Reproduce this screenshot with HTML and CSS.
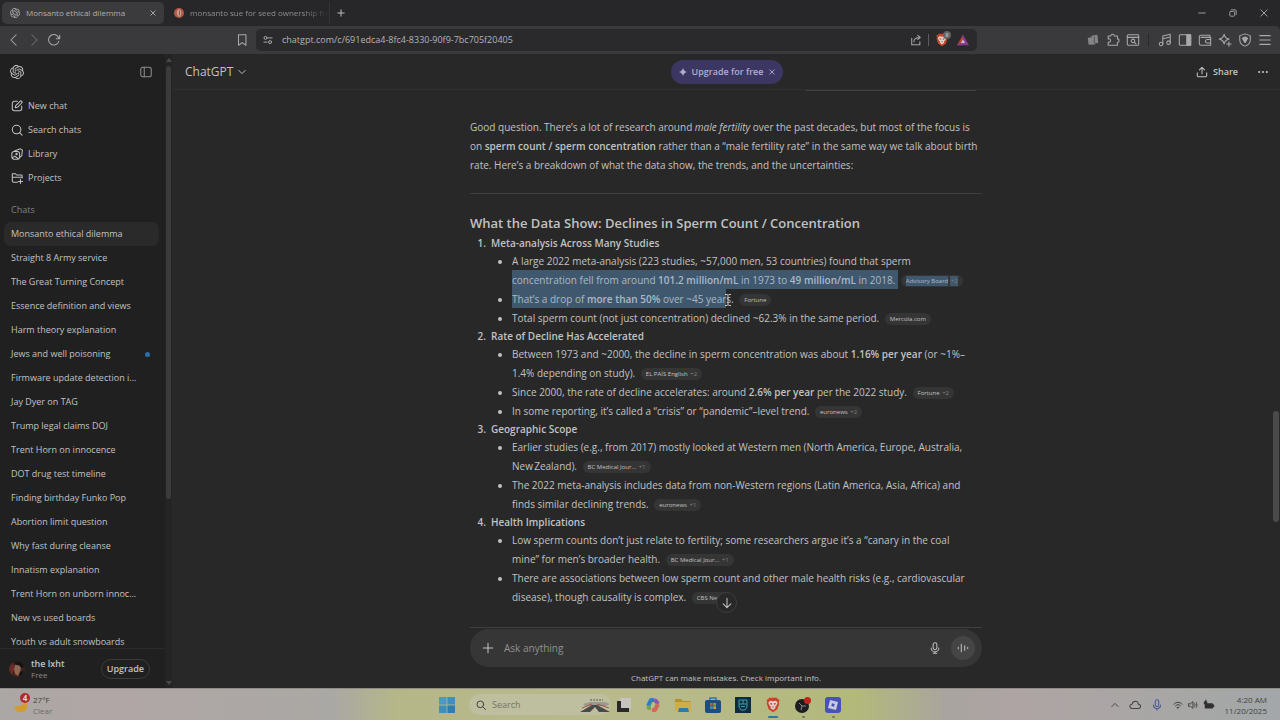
FILE: index.html
```html
<!DOCTYPE html>
<html lang="en">

<head>
  <meta charset="UTF-8">
  <meta name="viewport" content="width=device-width, initial-scale=1.0">
  <title>Monsanto ethical dilemma</title>
  <link rel="stylesheet" href="styles.css">
</head>

<body>
  <svg class="defs" aria-hidden="true">
    <symbol id="knot" viewBox="0 0 24 24">
      <path fill="currentColor" d="M22.2819 9.8211a5.9847 5.9847 0 0 0-.5157-4.9108 6.0462 6.0462 0 0 0-6.5098-2.9A6.0651 6.0651 0 0 0 4.9807 4.1818a5.9847 5.9847 0 0 0-3.9977 2.9 6.0462 6.0462 0 0 0 .7427 7.0966 5.98 5.98 0 0 0 .511 4.9107 6.051 6.051 0 0 0 6.5146 2.9001A5.9847 5.9847 0 0 0 13.2599 24a6.0557 6.0557 0 0 0 5.7718-4.2058 5.9894 5.9894 0 0 0 3.9977-2.9001 6.0557 6.0557 0 0 0-.7475-7.0729zm-9.022 12.6081a4.4755 4.4755 0 0 1-2.8764-1.0408l.1419-.0804 4.7783-2.7582a.7948.7948 0 0 0 .3927-.6813v-6.7369l2.02 1.1686a.071.071 0 0 1 .038.052v5.5826a4.504 4.504 0 0 1-4.4945 4.4944zm-9.6607-4.1254a4.4708 4.4708 0 0 1-.5346-3.0137l.142.0852 4.783 2.7582a.7712.7712 0 0 0 .7806 0l5.8428-3.3685v2.3324a.0804.0804 0 0 1-.0332.0615L9.74 19.9502a4.4992 4.4992 0 0 1-6.1408-1.6464zM2.3408 7.8956a4.485 4.485 0 0 1 2.3655-1.9728V11.6a.7664.7664 0 0 0 .3879.6765l5.8144 3.3543-2.0201 1.1685a.0757.0757 0 0 1-.071 0l-4.8303-2.7865A4.504 4.504 0 0 1 2.3408 7.872zm16.5963 3.8558L13.1038 8.364 15.1192 7.2a.0757.0757 0 0 1 .071 0l4.8303 2.7913a4.4944 4.4944 0 0 1-.6765 8.1042v-5.6772a.79.79 0 0 0-.407-.667zm2.0107-3.0231l-.142-.0852-4.7735-2.7818a.7759.7759 0 0 0-.7854 0L9.409 9.2297V6.8974a.0662.0662 0 0 1 .0284-.0615l4.8303-2.7866a4.4992 4.4992 0 0 1 6.6802 4.66zM8.3065 12.863l-2.02-1.1638a.0804.0804 0 0 1-.038-.0567V6.0742a4.4992 4.4992 0 0 1 7.3757-3.4537l-.142.0805L8.704 5.459a.7948.7948 0 0 0-.3927.6813zm1.0976-2.3654l2.602-1.4998 2.6069 1.4998v2.9994l-2.5974 1.4997-2.6067-1.4997Z" />
    </symbol>
    <symbol id="lion" viewBox="0 0 20 22">
      <path fill="#c8452a" d="M5 1h10l2 2 2 1-1 3 .6 2L16 17l-6 4-6-4L1.400 9 2 7 1 4l2-1z" />
      <path fill="#dcd3cf" d="M6 5l4 1 4-1 2.500 3-2 4-1.500 1 .5 2L10 18l-3.500-3 .5-2-1.500-1-2-4z" />
      <path fill="#c8452a" d="M6 8l3 1-.5 2L6.500 10zM14 8l-3 1 .5 2 2-1zM8.500 13h3L10 15z" />
    </symbol>
  </svg>

  <!-- tab strip -->
  <header class="tabs">
    <div class="tab active">
      <svg class="icon-10"><use href="#knot" /></svg>
      <span>Monsanto ethical dilemma</span>
      <button aria-label="Close tab"><svg class="icon-6 line" viewBox="0 0 8 8"><path d="M1 1l6 6M7 1L1 7" /></svg></button>
    </div>
    <div class="tab">
      <svg class="icon-10" viewBox="0 0 12 12"><circle cx="6" cy="6" r="6" fill="#b05a45" /><path d="M6 1.500c-2 1-3 3-2.500 5S5 10 6 10.500s2.500-1.500 2.700-4S8 2 6 1.500z" fill="#c9a493" /><path d="M6.500 3v6" stroke="#7c3b30" /></svg>
      <span class="fade">monsanto sue for seed ownership fro</span>
    </div>
    <button class="new-tab" aria-label="New tab"><svg class="icon-8 line" viewBox="0 0 10 10"><path d="M5 1v8M1 5h8" /></svg></button>
    <div class="window-buttons">
      <button aria-label="Minimize"><svg class="icon-8 line" viewBox="0 0 10 10"><path d="M1 5h8" /></svg></button>
      <button aria-label="Restore"><svg class="icon-8 line" viewBox="0 0 10 10"><rect x="1" y="3" width="6" height="6" rx="1" /><path d="M3 1h4.500A1.500 1.500 0 0 1 9 2.500V7" /></svg></button>
      <button aria-label="Close"><svg class="icon-8 line" viewBox="0 0 10 10"><path d="M1 1l8 8M9 1L1 9" /></svg></button>
    </div>
  </header>

  <!-- toolbar -->
  <div class="toolbar">
    <div class="nav-buttons">
      <button aria-label="Back"><svg class="icon-14 line" viewBox="0 0 16 16"><path d="M10.500 2l-6 6 6 6" /></svg></button>
      <button class="dim" aria-label="Forward"><svg class="icon-14 line" viewBox="0 0 16 16"><path d="M5.500 2l6 6-6 6" /></svg></button>
      <button aria-label="Reload"><svg class="icon-14 line" viewBox="0 0 16 16"><path d="M13.500 9.500A6 6 0 1 1 13.500 6M14.500 2.500v4h-4" /></svg></button>
      <button class="bookmark" aria-label="Bookmark"><svg class="icon-14 line" viewBox="0 0 16 16"><path d="M4 2h8.500v12L8.200 11 4 14z" /></svg></button>
    </div>
    <div class="address">
      <svg class="icon-10 line" viewBox="0 0 12 12"><circle cx="3" cy="3.500" r="1.800" /><path d="M6 3.500h5M1 8.500h4" /><circle cx="8.500" cy="8.500" r="1.800" /></svg>
      <input type="text" aria-label="Address" value="chatgpt.com/c/691edca4-8fc4-8330-90f9-7bc705f20405">
      <button aria-label="Share page"><svg class="icon-12 line" viewBox="0 0 14 14"><path d="M2 5v7.500h9.500V9M4.500 9c0-3 2-5 7-5M9 1.500L12 4 9 6.500" /></svg></button>
      <i class="divider"></i>
      <button class="shield" aria-label="Shields"><svg class="icon-14"><use href="#lion" /></svg><b>8</b></button>
      <button aria-label="Rewards"><svg class="icon-12" viewBox="0 0 14 14"><path fill="#b8472f" d="M7 1L0 13h4l3-6z" /><path fill="#8a3a96" d="M7 1l7 12H0l3-2.500h6.500L6 4z" /><path fill="#c9bdc4" d="M7 6l2.500 4.500h-5z" /></svg></button>
    </div>
    <div class="extensions">
      <button aria-label="Extension"><svg class="icon-14" viewBox="0 0 16 16"><path fill="#858587" d="M6 3l7-1 1 9-4 1zM2 5.500l7-1 1.500 8.500-7.500.5z" /><path d="M9.500 4v8" stroke="#4a4a4c" /></svg></button>
      <button aria-label="Extensions"><svg class="icon-14 line" viewBox="0 0 16 16"><path d="M2.500 3.500h3a2 2 0 1 1 4 0h3.500v3.200a2 2 0 1 1 0 4V14H2.500v-3.500a2 2 0 1 0 0-3.700z" /></svg></button>
      <button aria-label="Search tabs"><svg class="icon-14 line" viewBox="0 0 16 16"><rect x="1.500" y="2" width="13" height="12" rx="1" /><path d="M1.500 5h13M9.500 10.500l2 2" /><circle cx="8" cy="9" r="2" /></svg></button>
      <i class="divider dark"></i>
      <button aria-label="Playlist"><svg class="icon-14 line" viewBox="0 0 16 16"><circle cx="3.500" cy="12.500" r="2" /><circle cx="12" cy="11" r="2" /><path d="M5.500 12.500V3.500L14 1.500V11M5.500 6.500L14 4.500" /></svg></button>
      <button aria-label="Sidebar"><svg class="icon-14 line" viewBox="0 0 16 16"><rect x="1.500" y="2" width="13" height="12" rx="1" /><path fill="currentColor" d="M10 2h4.500v12H10z" /></svg></button>
      <button aria-label="Wallet"><svg class="icon-14 line" viewBox="0 0 16 16"><path d="M13.500 5V2.500h-10A2 2 0 0 0 1.500 4v8a2 2 0 0 0 2 2h11V5h-11M14.500 7.500h-4a2 2 0 0 0 0 4h4" /></svg></button>
      <button aria-label="Leo AI"><svg class="icon-14 line" viewBox="0 0 16 16"><path d="M7 1.500c.8 3.500 2 4.700 5.500 5.500C9 7.800 7.800 9 7 12.500 6.200 9 5 7.800 1.500 7 5 6.200 6.200 5 7 1.500zM12.500 10v5M10 12.500h5" /></svg></button>
      <button aria-label="VPN"><svg class="icon-14 line" viewBox="0 0 16 16"><path d="M8 1l6 2v5c0 3.500-3 6-6 7-3-1-6-3.500-6-7V3z" /><path fill="currentColor" d="M5 6l3-1.500L11 6l-3 5z" /></svg></button>
      <button aria-label="Menu"><svg class="icon-14 line" viewBox="0 0 16 16"><path d="M2 3h12M2 8h12M2 13h12" /></svg></button>
    </div>
  </div>

  <div class="app">
    <aside class="sidebar">
      <div class="sidebar-top">
        <a href="#" aria-label="Home"><svg class="icon-14"><use href="#knot" /></svg></a>
        <button aria-label="Close sidebar"><svg class="icon-14 line" viewBox="0 0 16 16"><rect x="2" y="2.500" width="12" height="11" rx="2.500" /><path d="M6 2.500v11" /></svg></button>
      </div>
      <nav class="menu">
        <a href="#"><svg class="icon-12 line" viewBox="0 0 14 14"><path d="M7.500 1.500H4A2.500 2.500 0 0 0 1.500 4v6A2.500 2.500 0 0 0 4 12.500h6a2.500 2.500 0 0 0 2.500-2.500V7M5 9l.5-2.500 5-5a1.400 1.400 0 0 1 2 2l-5 5z" /></svg>New chat</a>
        <a href="#"><svg class="icon-12 line" viewBox="0 0 14 14"><circle cx="6.500" cy="6.500" r="5" /><path d="M10 10l3 3" /></svg>Search chats</a>
        <a href="#"><svg class="icon-12 line" viewBox="0 0 14 14"><path d="M4 4V3.500L11 1l2.300 1.500-.8 6.500-2 1.500" /><rect x="1" y="4" width="9" height="9" rx="2.500" /><path d="M1.500 11.500l3-2 4 3" /><circle cx="6.500" cy="7" r=".8" /></svg>Library</a>
        <a href="#"><svg class="icon-12 line" viewBox="0 0 14 14"><path d="M7.500 12H3a1.500 1.500 0 0 1-1.500-1.500V2H5l1.500 1.500H12a1 1 0 0 1 1 1V7M1.500 6H13M11 8.500v5M8.500 11h5" /></svg>Projects</a>
      </nav>
      <h2>Chats</h2>
      <nav class="chats">
        <a href="#" class="current">Monsanto ethical dilemma</a>
        <a href="#">Straight 8 Army service</a>
        <a href="#">The Great Turning Concept</a>
        <a href="#">Essence definition and views</a>
        <a href="#">Harm theory explanation</a>
        <a href="#" class="unread">Jews and well poisoning</a>
        <a href="#">Firmware update detection i...</a>
        <a href="#">Jay Dyer on TAG</a>
        <a href="#">Trump legal claims DOJ</a>
        <a href="#">Trent Horn on innocence</a>
        <a href="#">DOT drug test timeline</a>
        <a href="#">Finding birthday Funko Pop</a>
        <a href="#">Abortion limit question</a>
        <a href="#">Why fast during cleanse</a>
        <a href="#">Innatism explanation</a>
        <a href="#">Trent Horn on unborn innoc...</a>
        <a href="#">New vs used boards</a>
        <a href="#">Youth vs adult snowboards</a>
      </nav>
      <div class="account">
        <svg class="icon-16" viewBox="0 0 16 16"><circle cx="8" cy="8" r="8" fill="#3a2420" /><path fill="#6b2a26" d="M1 5a8 8 0 0 0 2 9l3-7-2-5z" /><path fill="#8f6553" d="M6 4c3-2 6 0 6 3l-1 4-2 4-3-2-1-5z" /><path fill="#151313" d="M5 1c4-2 9 0 10 5l-3 1c-1-3-3-3-5-3zM11 11l4-1-2 4-3 1z" /></svg>
        <div class="who">
          <strong>the lxht</strong>
          <span>Free</span>
        </div>
        <button>Upgrade</button>
      </div>
    </aside>
    <div class="side-scroll"><i class="up"></i><i class="thumb"></i><i class="down"></i></div>

    <main>
      <div class="chat-header">
        <button class="model">ChatGPT <svg class="icon-8 line" viewBox="0 0 10 10"><path d="M1 3l4 4 4-4" /></svg></button>
        <button class="promo"><svg class="icon-8" viewBox="0 0 10 10"><path fill="currentColor" d="M5 0c.7 2.700 2.300 4.300 5 5-2.700.7-4.300 2.300-5 5-.7-2.700-2.300-4.300-5-5 2.700-.7 4.300-2.300 5-5z" /></svg>Upgrade for free<svg class="icon-6 line" viewBox="0 0 8 8"><path d="M1 1l6 6M7 1L1 7" /></svg></button>
        <div class="actions">
          <button><svg class="icon-12 line" viewBox="0 0 14 14"><path d="M7 9V1.500M4 4.500l3-3 3 3M1.500 8v3a1.500 1.500 0 0 0 1.500 1.500h8a1.500 1.500 0 0 0 1.500-1.500V8" /></svg>Share</button>
          <button aria-label="More"><svg class="icon-10" viewBox="0 0 10 10"><g fill="currentColor"><circle cx="1.200" cy="5" r="1.100" /><circle cx="5" cy="5" r="1.100" /><circle cx="8.800" cy="5" r="1.100" /></g></svg></button>
        </div>
      </div>

      <div class="conversation">
        <div class="thread">
          <div class="bubble-edge"></div>
          <article>
            <p>Good question. There’s a lot of research around <em>male fertility</em> over the past decades, but most of the focus is<br>
              on <b>sperm count / sperm concentration</b> rather than a “male fertility rate” in the same way we talk about birth<br>
              rate. Here’s a breakdown of what the data show, the trends, and the uncertainties:</p>
            <hr>
            <h3>What the Data Show: Declines in Sperm Count / Concentration</h3>
            <ol>
              <li><b>Meta-analysis Across Many Studies</b>
                <ul>
                  <li>A large 2022 meta-analysis (223 studies, ~57,000 men, 53 countries) found that sperm<br>
                    <span class="selected">concentration fell from around <b>101.2 million/mL</b> in 1973 to <b>49 million/mL</b> in 2018. </span><a href="#" class="cite"><mark>Advisory Board</mark> <mark><i>+2</i></mark></a></li>
                  <li><span class="selected">That’s a drop of <b>more than 50%</b> over ~45 year</span><span class="caret"><svg viewBox="0 0 8 14"><path d="M1 1.500h2.200L4 2.300l.8-.8H7M4 2v10M1 12.500h2.200l.8-.8.8.8H7" /></svg></span>s. <a href="#" class="cite">Fortune</a></li>
                  <li>Total sperm count (not just concentration) declined ~62.3% in the same period. <a href="#" class="cite">Mercola.com</a></li>
                </ul>
              </li>
              <li><b>Rate of Decline Has Accelerated</b>
                <ul>
                  <li>Between 1973 and ~2000, the decline in sperm concentration was about <b>1.16% per year</b> (or ~1%–<br>
                    1.4% depending on study). <a href="#" class="cite">EL PAÍS English <i>+2</i></a></li>
                  <li>Since 2000, the rate of decline accelerates: around <b>2.6% per year</b> per the 2022 study. <a href="#" class="cite">Fortune <i>+2</i></a></li>
                  <li>In some reporting, it’s called a “crisis” or “pandemic”–level trend. <a href="#" class="cite">euronews <i>+2</i></a></li>
                </ul>
              </li>
              <li><b>Geographic Scope</b>
                <ul>
                  <li>Earlier studies (e.g., from 2017) mostly looked at Western men (North America, Europe, Australia,<br>
                    New&#8239;Zealand). <a href="#" class="cite">BC Medical Jour... <i>+1</i></a></li>
                  <li>The 2022 meta-analysis includes data from non-Western regions (Latin America, Asia, Africa) and<br>
                    finds similar declining trends. <a href="#" class="cite">euronews <i>+1</i></a></li>
                </ul>
              </li>
              <li><b>Health Implications</b>
                <ul>
                  <li>Low sperm counts don’t just relate to fertility; some researchers argue it’s a “canary in the coal<br>
                    mine” for men’s broader health. <a href="#" class="cite">BC Medical Jour... <i>+1</i></a></li>
                  <li>There are associations between low sperm count and other male health risks (e.g., cardiovascular<br>
                    disease), though causality is complex. <a href="#" class="cite">CBS News</a></li>
                </ul>
              </li>
            </ol>
          </article>
        </div>
        <button class="to-bottom" aria-label="Scroll to bottom"><svg class="icon-12 line" viewBox="0 0 14 14"><path d="M7 1.500v11M2.500 8L7 12.500 11.500 8" /></svg></button>
      </div>

      <form class="composer">
        <button type="button" aria-label="Add"><svg class="icon-12 line" viewBox="0 0 14 14"><path d="M7 1.500v11M1.500 7h11" /></svg></button>
        <input type="text" aria-label="Message" placeholder="Ask anything">
        <button type="button" aria-label="Dictate"><svg class="icon-12 line" viewBox="0 0 14 14"><rect x="4.800" y="1" width="4.400" height="8" rx="2.200" /><path d="M2.500 7a4.500 4.500 0 0 0 9 0M7 11.500V13M5 13h4" /></svg></button>
        <button type="button" class="voice" aria-label="Voice mode"><svg class="icon-12 line" viewBox="0 0 14 14"><path d="M1.500 6v2M5 2.500v9M9 4.500v5M12.500 6v2" /></svg></button>
      </form>
      <p class="notice">ChatGPT can make mistakes. Check important info.</p>
    </main>
    <div class="page-scroll"><i></i></div>
  </div>

  <footer class="taskbar">
    <div class="weather">
      <div class="moon">
        <svg class="icon-16" viewBox="0 0 16 16"><path fill="#d39b2e" d="M1 9c5 1 9-1 12-4 3 4 1 10-5 10-4 0-6-2-7-6z" /></svg>
        <b>4</b>
      </div>
      <div>27°F<br><span>Clear</span></div>
    </div>
    <div class="dock">
      <button aria-label="Start"><svg class="icon-16" viewBox="0 0 16 16"><path fill="#4b9bc0" d="M0 0h7.600v7.600H0z" /><path fill="#3f8fbd" d="M8.400 0H16v7.600H8.400zM0 8.400h7.600V16H0z" /><path fill="#2f7db3" d="M8.400 8.400H16V16H8.400z" /></svg></button>
      <label class="search">
        <svg class="icon-10 line" viewBox="0 0 12 12"><circle cx="5.200" cy="5.200" r="4" /><path d="M8 8l3.500 3.500" /></svg>
        <input type="text" aria-label="Search" placeholder="Search">
        <svg class="banner" viewBox="0 0 32 14"><path fill="#9b9993" d="M4 6l7-2 15 0 5 2-4 2H6z" /><path stroke="#5a5855" d="M11 2h13" stroke-dasharray="2 1" /><path fill="#4a4948" d="M1 14l12-7h5l13 7H20l-4-5-5 5z" /><path stroke="#a5533f" d="M3 10l10-4M18 6l12 4" /></svg>
      </label>
      <button aria-label="Task view"><svg class="icon-16" viewBox="0 0 16 16"><path fill="#c6c4be" d="M5 1h11v11H5z" /><path fill="#282828" d="M2 4h4v7h8v4H2z" /></svg></button>
      <button aria-label="Copilot"><svg class="icon-16" viewBox="0 0 16 16" fill="none" stroke-width="4" stroke-linejoin="round"><path stroke="#2f7fc0" d="M9 3H6L3 9" /><path stroke="#72a553" d="M3 9l1 2h2" /><path stroke="#8856b5" d="M9 3l2 1 2 3" /><path stroke="#d0695a" d="M13 7l-3 6H7" /></svg></button>
      <button aria-label="File Explorer"><svg class="icon-16" viewBox="0 0 16 16"><path fill="#b5902d" d="M0 2h6l2 2h8v4H0z" /><path fill="#ceae4b" d="M0 5h16v9H0z" /><path fill="#2f7bb0" d="M4 11h9l1 4H3z" /></svg></button>
      <button aria-label="Store"><svg class="icon-16" viewBox="0 0 16 16"><path fill="none" stroke="#2c79a7" stroke-width="1.500" d="M5 4V1h6v3" /><rect y="3" width="16" height="13" rx="2" fill="#1c4f7c" /><path fill="#c35c3a" d="M5 6h2.700v2.700H5z" /><path fill="#7ba53d" d="M8.300 6H11v2.700H8.300z" /><path fill="#3b93c2" d="M5 9.300h2.700V12H5z" /><path fill="#c9a437" d="M8.300 9.300H11V12H8.300z" /></svg></button>
      <button aria-label="Predator"><svg class="icon-16" viewBox="0 0 16 16"><path fill="#0d2c3d" d="M0 0h16v16H0z" /><path fill="none" stroke="#3c9fab" d="M4 3h8v7l-2 3H6l-2-3zM4 7h8M8 3v4M6 9.500h4" /></svg></button>
      <button class="running focus" aria-label="Brave"><svg class="icon-16"><use href="#lion" /></svg></button>
      <button class="running" aria-label="OBS"><svg class="icon-16" viewBox="0 0 16 16"><circle cx="7" cy="9" r="7" fill="#1d1c1e" /><path fill="none" stroke="#8d8b8b" d="M7 9L4 6M7 9h4M7 9l-1 4" /><circle cx="12.500" cy="3.500" r="3.500" fill="#c3221c" /></svg></button>
      <button class="running" aria-label="Roblox"><svg class="icon-16" viewBox="0 0 16 16"><rect width="16" height="16" rx="3" fill="#4652b5" /><path fill="#c9c9dc" d="M5 3l8 2-2 8-8-2z" /><path fill="#4652b5" d="M7 6.300l2.700.7L9 9.700 6.300 9z" /></svg></button>
    </div>
    <div class="tray">
      <svg class="icon-8 line" viewBox="0 0 10 10"><path d="M1 7l4-4 4 4" /></svg>
      <svg class="icon-12 line cloud" viewBox="0 0 14 14"><path d="M3.500 11a2.500 2.500 0 0 1 0-5C4 3.500 6 2.500 7.500 2.500S11 4 11 6a2.500 2.500 0 0 1 0 5z" /></svg>
      <svg class="icon-12 line mic" viewBox="0 0 14 14"><rect x="5" y="1" width="4" height="8" rx="2" /><path d="M2.800 7a4.200 4.200 0 0 0 8.400 0M7 11.500V13" /></svg>
      <div class="status">
        <svg class="icon-10 line" viewBox="0 0 12 12"><path d="M1 5c3-3 7-3 10 0M3 7c2-2 4-2 6 0M5 9c.6-.6 1.400-.6 2 0v.5H5z" /></svg>
        <svg class="icon-10 line" viewBox="0 0 12 12"><path d="M1 4.500h2L6 2v8L3 7.500H1zM8 4.500c.7 1 .7 2 0 3M9.800 3c1.300 2 1.300 4 0 6" /></svg>
        <svg class="icon-12" viewBox="0 0 14 14"><path fill="#303030" d="M2 5h9.500v1.500H13v3h-1.500V11H2zM3 1h1v2h1v3H1V3h1z" /></svg>
      </div>
      <time>4:20 AM<br>11/20/2025</time>
    </div>
  </footer>
</body>

</html>
```
FILE: styles.css
```css
* {
  margin: 0;
  padding: 0;
  box-sizing: border-box;
}

body {
  height: 100vh;
  display: flex;
  flex-direction: column;
  overflow: hidden;
  background: #282828;
  color: #c2c2c2;
  font-family: "Open Sans", "Noto Sans", sans-serif;
  font-size: 9px;
  line-height: 12px;
  white-space: nowrap;
}

a {
  color: inherit;
  text-decoration: none;
}

button,
input {
  border: none;
  outline: none;
  background: none;
  color: inherit;
  font: inherit;
}

button {
  display: flex;
  align-items: center;
  justify-content: center;
}

svg {
  display: block;
  flex: none;
}

.defs {
  position: absolute;
  width: 0;
  height: 0;
}

.line {
  fill: none;
  stroke: currentColor;
  stroke-width: 1.2;
  stroke-linecap: round;
  stroke-linejoin: round;
}

.icon-6 { width: 6px; height: 6px; }
.icon-8 { width: 8px; height: 8px; }
.icon-10 { width: 10px; height: 10px; }
.icon-12 { width: 12px; height: 12px; }
.icon-14 { width: 14px; height: 14px; }
.icon-16 { width: 16px; height: 16px; }

/* tab strip */
.tabs {
  display: flex;
  align-items: center;
  height: 26px;
  padding: 0 12px 0 2px;
  background: #272729;
  font-size: 8px;
}

.tab {
  display: flex;
  align-items: center;
  gap: 6px;
  width: 162px;
  height: 22px;
  padding: 0 8px;
  border-radius: 5px;
  color: #8e8e90;
}

.tab + .tab {
  width: 166px;
  padding: 0 4px 0 10px;
  border-right: 1px solid #343436;
  border-radius: 0;
}

.tab span {
  flex: 1;
}

.tab .fade {
  -webkit-mask-image: linear-gradient(to right, #000 80%, transparent);
  mask-image: linear-gradient(to right, #000 80%, transparent);
}

.tab.active {
  background: #3b3b3d;
  color: #b0b0b2;
}

.new-tab {
  width: 22px;
  height: 20px;
}

.window-buttons {
  display: flex;
  gap: 23px;
  margin-left: auto;
  color: #a0a0a2;
}

/* toolbar */
.toolbar {
  display: flex;
  align-items: center;
  height: 28px;
  background: #3a3a3c;
  border-radius: 0 5px 0 0;
  color: #a8a8aa;
}

.nav-buttons {
  flex: 0 0 20%;
  display: flex;
  gap: 6px;
  padding: 0 7px;
}

.dim {
  color: #6e6e70;
}

.bookmark {
  margin-left: auto;
}

.address {
  flex: 1;
  display: flex;
  align-items: center;
  gap: 6px;
  height: 22px;
  padding: 0 8px 0 7px;
  border-radius: 5px;
  background: #2a2a2c;
}

.address input {
  flex: 1;
  padding-left: 3px;
  color: #b4b4b6;
}

.divider {
  width: 1px;
  height: 12px;
  background: #5c5c5e;
}

.divider.dark {
  margin: 0 3px 0 2px;
  background: #29292b;
}

.shield {
  position: relative;
  margin-right: 2px;
}

.shield b {
  position: absolute;
  top: -2px;
  right: -2px;
  width: 8px;
  height: 8px;
  border-radius: 4px;
  background: #626264;
  color: #aaa;
  font-size: 6px;
  line-height: 8px;
}

.extensions {
  flex: 0 0 303px;
  display: flex;
  align-items: center;
  justify-content: flex-end;
  gap: 6px;
  padding-right: 8px;
}

/* app */
.app {
  flex: 1;
  display: flex;
  min-height: 0;
}

.sidebar {
  display: flex;
  flex-direction: column;
  width: 165px;
  background: #202020;
}

.sidebar-top {
  flex: none;
  display: flex;
  align-items: center;
  justify-content: space-between;
  height: 40px;
  padding: 0 12px 5px 10px;
}

.sidebar-top button {
  color: #8c8c8c;
}

.menu a {
  display: flex;
  align-items: center;
  gap: 5px;
  height: 24px;
  padding-left: 11px;
}

.sidebar h2 {
  flex: none;
  margin-top: 8px;
  padding-left: 11px;
  color: #808080;
  font-size: 9px;
  font-weight: 400;
  line-height: 24px;
}

.chats {
  flex: 1;
  overflow: hidden;
  padding: 0 6px 0 4px;
}

.chats a {
  display: flex;
  align-items: center;
  justify-content: space-between;
  height: 24px;
  padding: 0 9px 0 7px;
  border-radius: 7px;
}

.chats .current {
  background: #2a2a2a;
}

.unread::after {
  content: "";
  width: 5px;
  height: 5px;
  border-radius: 50%;
  background: #2c6cab;
}

.account {
  flex: none;
  display: flex;
  align-items: center;
  gap: 6px;
  height: 40px;
  padding: 0 15px 0 9px;
  border-top: 1px solid #2b2b2b;
}

.who {
  flex: 1;
  line-height: 11px;
}

.who strong {
  display: block;
  font-weight: 600;
}

.who span {
  color: #8c8c8c;
  font-size: 8px;
}

.account button {
  height: 20px;
  padding: 0 5px;
  border: 1px solid #3c3c3c;
  border-radius: 10px;
  font-weight: 600;
}

.side-scroll {
  display: flex;
  flex-direction: column;
  align-items: center;
  width: 7px;
  padding: 4px 0 3px;
  background: #242424;
}

.side-scroll .thumb {
  width: 5px;
  height: 69%;
  margin: 4px 0 auto;
  border-radius: 3px;
  background: #3b3b3b;
}

.up,
.down {
  border: 3px solid transparent;
  border-top-width: 0;
  border-bottom: 4px solid #4a4a4a;
}

.down {
  transform: rotate(180deg);
}

main {
  flex: 1;
  display: flex;
  flex-direction: column;
  min-width: 0;
}

.chat-header {
  display: grid;
  grid-template-columns: 1fr auto 1fr;
  align-items: center;
  height: 36px;
  padding: 0 12px 0 13px;
  border-bottom: 1px solid #303030;
}

.model {
  justify-self: start;
  gap: 5px;
  font-size: 12px;
}

.promo {
  gap: 5px;
  height: 24px;
  padding: 0 8px;
  border-radius: 12px;
  background: #3c3663;
  color: #b3aed0;
  font-weight: 600;
}

.actions {
  justify-self: end;
  display: flex;
  gap: 20px;
}

.actions button {
  gap: 5px;
  font-weight: 600;
}

.conversation {
  position: relative;
  flex: 1;
  min-height: 0;
}

.thread {
  height: 100%;
  overflow: hidden;
}

.bubble-edge {
  width: 170px;
  height: 1px;
  margin: 0 auto;
  transform: translateX(165px);
  background: #404040;
}

article,
.composer {
  width: 512px;
  max-width: 100%;
  margin: 0 auto;
}

article {
  padding-top: 27px;
  font-size: 10px;
  line-height: 19px;
}

article b {
  font-weight: 600;
}

hr {
  margin: 18px 0 17px;
  border: none;
  border-top: 1px solid #3f3f3f;
}

h3 {
  font-size: 13px;
  font-weight: 600;
  line-height: 24px;
}

ol {
  padding-left: 21px;
}

ol > li {
  line-height: 17px;
}

ol > li::marker {
  content: counter(list-item) ".\2002";
  font-weight: 600;
}

ul {
  padding-left: 21px;
  list-style: disc;
}

ul li {
  line-height: 19px;
}

.selected {
  padding: 3px 0 2px;
  background: #40586e;
  color: #abb9c6;
}

.cite {
  display: inline-block;
  height: 12px;
  margin-left: 3px;
  padding: 0 5px;
  border-radius: 6px;
  background: #353535;
  font-size: 6px;
  line-height: 12px;
  vertical-align: middle;
}

.cite i {
  padding-left: 1px;
  color: #808080;
  font-style: normal;
}

.cite mark {
  padding: 1px 0;
  background: #40586e;
  color: #abb9c6;
}

.caret {
  position: relative;
}

.caret svg {
  position: absolute;
  top: 1px;
  left: -2px;
  width: 8px;
  height: 14px;
  fill: none;
  stroke: #c8c8c8;
}

.to-bottom {
  position: absolute;
  bottom: 16px;
  left: 50%;
  width: 21px;
  height: 21px;
  margin-left: -10px;
  border: 1px solid #3f3f3f;
  border-radius: 50%;
  background: #282828;
}

.composer {
  display: flex;
  align-items: center;
  gap: 10px;
  height: 38px;
  padding: 0 7px 0 12px;
  border-radius: 19px;
  background: #363636;
}

.composer::before {
  content: "";
  position: absolute;
  width: 512px;
  height: 1px;
  margin: -42px 0 0 -12px;
  background: #3f3f3f;
}

.composer input {
  flex: 1;
  font-size: 10px;
  line-height: 16px;
}

.composer input::placeholder {
  color: #919191;
}

.voice {
  width: 24px;
  height: 24px;
  border-radius: 50%;
  background: #454545;
}

.notice {
  font-size: 8px;
  line-height: 21px;
  text-align: center;
}

/* lies over the right edge of the page */
.page-scroll {
  width: 8px;
  margin-left: -8px;
  padding: 0 1px;
}

.page-scroll i {
  display: block;
  height: 111px;
  margin-top: 357px;
  border-radius: 3px;
  background: #4a4a4a;
}

/* taskbar */
.taskbar {
  display: grid;
  grid-template-columns: 1fr auto 1fr;
  align-items: center;
  height: 32px;
  padding: 0 13px;
  border-top: 1px solid #8e8c84;
  background: linear-gradient(to right, #aba7a5 0, #b0a6a5 8%, #aaa8a4 26%, #b5b788 31%, #b8ba8c 50%, #b2b97b 67%, #a9a49f 74%, #aea4a4 80%, #a7a7a5 92%, #a3a7a9 100%);
  color: #434341;
  font-size: 8px;
  line-height: 11px;
}

.weather {
  display: flex;
  align-items: center;
  gap: 4px;
}

.weather span {
  color: #6c6a69;
}

.moon {
  position: relative;
}

.moon b {
  position: absolute;
  top: -4px;
  right: -1px;
  width: 10px;
  height: 10px;
  border-radius: 5px;
  background: #b32a2a;
  color: #ddd;
  font-size: 8px;
  line-height: 10px;
  text-align: center;
}

.dock {
  display: flex;
  align-items: center;
  gap: 14px;
}

.dock button {
  position: relative;
}

.search {
  display: flex;
  align-items: center;
  gap: 6px;
  width: 142px;
  height: 21px;
  margin-right: -10px;
  padding-left: 7px;
  border-radius: 11px;
  background: #bebf9f;
}

.search input {
  flex: 1;
  min-width: 0;
  font-size: 9px;
}

.search input::placeholder {
  color: #74746a;
}

.banner {
  width: 32px;
  height: 14px;
}

.running::after {
  content: "";
  position: absolute;
  bottom: -5px;
  width: 3px;
  height: 2px;
  border-radius: 1px;
  background: #75785e;
}

.running.focus::after {
  width: 10px;
  background: #2b77a5;
}

.tray {
  justify-self: end;
  display: flex;
  align-items: center;
  gap: 10px;
}

.mic {
  color: #4a5796;
}

.status {
  display: flex;
  align-items: center;
  gap: 5px;
}

.tray time {
  text-align: right;
}
```
